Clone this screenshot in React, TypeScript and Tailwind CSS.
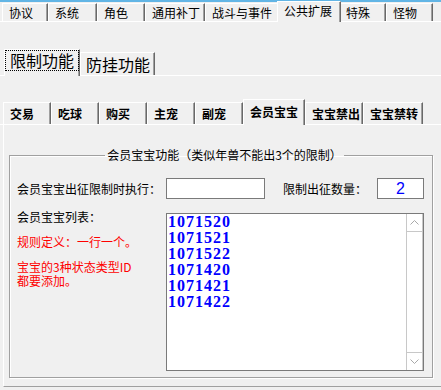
import React from "react";

const topTabs = [
  { label: "协议", w: "w-[46px]" },
  { label: "系统", w: "w-[49px]" },
  { label: "角色", w: "w-[48px]" },
  { label: "通用补丁", w: "w-[60px]" },
  { label: "战斗与事件", w: "w-[74px]" },
  { label: "公共扩展", w: "w-[64px]", active: true },
  { label: "特殊", w: "w-[47px]" },
  { label: "怪物", w: "w-[47px]" },
];

const subTabs = [
  { label: "交易", w: "w-[48px]" },
  { label: "吃球", w: "w-[48px]" },
  { label: "购买", w: "w-[48px]" },
  { label: "主宠", w: "w-[48px]" },
  { label: "副宠", w: "w-[48px]" },
  { label: "会员宝宝", w: "w-[62px]", active: true },
  { label: "宝宝禁出", w: "w-[58px]" },
  { label: "宝宝禁转", w: "w-[60px]" },
];

const petIds = ["1071520", "1071521", "1071522", "1071420", "1071421", "1071422"];

const Chevron = ({ up }: { up?: boolean }) => (
  <svg width="9" height="5" viewBox="0 0 9 5" className="block">
    <polyline
      points={up ? "0.5,4.5 4.5,0.5 8.5,4.5" : "0.5,0.5 4.5,4.5 8.5,0.5"}
      fill="none"
      stroke="#a8a8a8"
      strokeWidth="1"
    />
  </svg>
);

const App = () => {
  return (
    <div className="w-[441px] h-[390px] overflow-hidden bg-[#f0f0f0] text-black font-['Noto_Sans_CJK_SC',sans-serif] flex flex-col">
      {/* window top edge */}
      <div className="h-[2px] bg-[#62b5e5] shrink-0" />

      {/* main tabs */}
      <div className="flex items-end h-[20px] pl-[2px] border-b border-white shrink-0">
        {topTabs.map((t) =>
          t.active ? (
            <div
              key={t.label}
              className={`${t.w} relative z-10 -mx-[2px] -mb-px h-[21px] bg-[#f0f0f0] border-t border-l border-white border-r border-r-[#696969] shadow-[inset_-1px_0_0_#a0a0a0] pl-[6px] text-[12px] leading-[17px]`}
            >
              {t.label}
            </div>
          ) : (
            <div
              key={t.label}
              className={`${t.w} h-[18px] border-t border-l border-white border-r border-r-[#696969] shadow-[inset_-1px_0_0_#a0a0a0] pl-[6px] text-[12px] leading-[17px]`}
            >
              {t.label}
            </div>
          )
        )}
      </div>

      {/* 限制功能 / 防挂功能 */}
      <div className="flex items-end h-[26px] mt-[28px] pl-[4px] border-b border-white shrink-0">
        <div className="relative z-10 -mb-px w-[76px] h-[27px] bg-[#f0f0f0] border-t border-l border-white border-r border-r-[#696969] shadow-[inset_-1px_0_0_#a0a0a0]">
          <div className="h-[21px] border border-dotted border-black pl-[4px] text-[16px] leading-[19px]">
            限制功能
          </div>
        </div>
        <div className="w-[75px] h-[23px] border-t border-l border-white border-r border-r-[#696969] shadow-[inset_-1px_0_0_#a0a0a0] pl-[5px] text-[16px] leading-[22px]">
          防挂功能
        </div>
      </div>

      {/* sub tabs */}
      <div className="flex items-end h-[24px] mt-[25px] pl-[3px] border-b border-white shrink-0">
        {subTabs.map((t) =>
          t.active ? (
            <div
              key={t.label}
              className={`${t.w} relative z-10 -mb-px h-[26px] bg-[#f0f0f0] border-t border-l border-white border-r border-r-[#696969] shadow-[inset_-1px_0_0_#a0a0a0] pl-[6px] text-[12px] font-bold leading-[23px]`}
            >
              {t.label}
            </div>
          ) : (
            <div
              key={t.label}
              className={`${t.w} h-[22px] border-t border-l border-white border-r border-r-[#696969] shadow-[inset_-1px_0_0_#a0a0a0] pl-[6px] text-[12px] font-bold leading-[22px]`}
            >
              {t.label}
            </div>
          )
        )}
      </div>

      {/* sub tab page */}
      <div className="ml-[3px] h-[262px] border-l border-white border-b border-b-[#a0a0a0] shrink-0">
        <fieldset className="ml-[5px] mt-[22px] w-[424px] h-[231px] border border-[#a0a0a0] shadow-[inset_1px_1px_0_#fff,1px_1px_0_#fff] pl-[7px]">
          <legend className="mx-auto px-[2px] text-[12px] leading-[16px]">
            会员宝宝功能（类似年兽不能出3个的限制）
          </legend>

          <div className="flex items-center h-[21px] mt-[15px] text-[12px] whitespace-nowrap">
            <div className="w-[149px]">会员宝宝出征限制时执行：</div>
            <div className="w-[99px] h-[21px] bg-white border border-[#7a7a7a]" />
            <div className="w-[112px] pl-[18px]">限制出征数量：</div>
            <div className="w-[47px] h-[21px] bg-white border border-[#7a7a7a] flex items-center justify-center text-[16px] text-[#0000ff] font-['Liberation_Sans',sans-serif]">
              2
            </div>
          </div>

          <div className="flex mt-[14px] text-[12px]">
            <div className="w-[149px] whitespace-nowrap">
              <div className="-mt-[3px] leading-[14px]">会员宝宝列表：</div>
              <div className="mt-[11px] leading-[14px] text-[#ff0000]">规则定义：一行一个。</div>
              <div className="mt-[11px] leading-[14px] text-[#ff0000]">宝宝的3种状态类型ID</div>
              <div className="leading-[13px] text-[#ff0000]">都要添加。</div>
            </div>
            <div className="w-[258px] h-[158px] bg-white border border-[#7a7a7a] flex">
              <div className="flex-1 pl-[1px] text-[16px] leading-[16px] tracking-[1px] font-bold text-[#0000ff] font-['Liberation_Serif',serif]">
                {petIds.map((id) => (
                  <div key={id}>{id}</div>
                ))}
              </div>
              <div className="w-[17px] flex flex-col border-l border-r border-[#c8c8c8]">
                <div className="h-[18px] border-b border-[#c8c8c8] flex items-center justify-center">
                  <Chevron up />
                </div>
                <div className="flex-1" />
                <div className="h-[18px] border-t border-[#c8c8c8] flex items-center justify-center">
                  <Chevron />
                </div>
              </div>
            </div>
          </div>
        </fieldset>
      </div>
    </div>
  );
};

export default App;
